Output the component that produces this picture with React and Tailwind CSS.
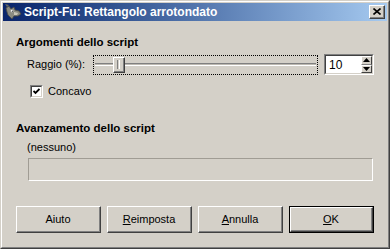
const face = { fontFamily: '"Liberation Sans", Arial, sans-serif' }

function Btn({ children, def }) {
  const inner = (
    <div className="h-full w-full border-t border-l border-t-white border-l-white border-r border-b border-r-[#404040] border-b-[#404040]">
      <div className="h-full w-full border-r border-b border-r-[#808080] border-b-[#808080] flex items-center justify-center text-[11px] text-black">
        {children}
      </div>
    </div>
  )
  return (
    <div className={def ? 'w-[85px] h-[27px] border border-black' : 'w-[85px] h-[27px]'}>{inner}</div>
  )
}

function Wilber() {
  return (
    <svg width="17" height="16" viewBox="0 0 17 16">
      <path d="M1 4 L4 2 L6 5 L9 3 L10 6 L14 7 L16 10 L13 12 L9 12 L7 15 L5 13 L3 11 L2 8 Z" fill="#8a8a80" stroke="#4a4a44" strokeWidth="0.8" />
      <path d="M9 8 L13 9 L12 11 L9 11 Z" fill="#c9c6b8" />
      <circle cx="7" cy="7" r="1.3" fill="#fff" />
      <circle cx="7.3" cy="7.2" r="0.6" fill="#000" />
      <path d="M2 3 L0 0 L4 1 Z" fill="#6a6a60" />
    </svg>
  )
}

export default function App() {
  return (
    <div className="w-[390px] h-[249px] bg-[#d4d0c8] border-t border-l border-t-[#d4d0c8] border-l-[#d4d0c8] border-r border-b border-r-[#404040] border-b-[#404040]" style={face}>
      <div className="h-full border-t border-l border-t-white border-l-white border-r border-b border-r-[#808080] border-b-[#808080] p-px flex flex-col">
        {/* title bar */}
        <div className="h-[18px] flex items-center bg-gradient-to-r from-[#0a246a] to-[#a6caf0] pl-[2px] pr-[2px]">
          <Wilber />
          <span className="ml-[2px] text-white font-bold text-[12px] leading-none">Script-Fu: Rettangolo arrotondato</span>
          <div className="ml-auto w-[16px] h-[14px] bg-[#d4d0c8] border-t border-l border-t-white border-l-white border-r border-b border-r-[#404040] border-b-[#404040]">
            <div className="h-full w-full border-r border-b border-r-[#808080] border-b-[#808080] flex items-center justify-center">
              <svg width="8" height="7" viewBox="0 0 8 7">
                <path d="M0.5 0.5 L7.5 6.5 M7.5 0.5 L0.5 6.5" stroke="#000" strokeWidth="1.6" />
              </svg>
            </div>
          </div>
        </div>

        {/* body */}
        <div className="flex flex-col pl-[13px] pt-[15px] text-[11px] text-black">
          <div className="font-bold text-[11.5px] leading-[13px]">Argomenti dello script</div>

          <div className="mt-[5px] h-[21px] flex items-center pl-[11px]">
            <span className="w-[66px] leading-[13px]">Raggio (%):</span>
            <div className="w-[225px] h-[20px] border border-dotted border-black relative flex items-center px-[1px]">
              <div className="w-full h-[3px] border-t border-t-[#808080] bg-[#bdb9b1] border-b border-b-white" />
              <div className="absolute left-[19px] top-[1px] w-[12px] h-[16px] bg-[#d4d0c8] border-t border-l border-t-white border-l-white border-r border-b border-r-[#404040] border-b-[#404040]">
                <div className="h-full w-full border-r border-b border-r-[#808080] border-b-[#808080] flex justify-center pt-[2px]">
                  <div className="w-[3px] h-[9px] border-l border-l-[#808080] border-r border-r-white" />
                </div>
              </div>
            </div>
            <div className="ml-[6px] w-[50px] h-[21px] border-t border-l border-t-[#808080] border-l-[#808080] border-r border-b border-r-white border-b-white">
              <div className="h-full w-full border-t border-l border-t-[#404040] border-l-[#404040] border-r border-b border-r-[#d4d0c8] border-b-[#d4d0c8] bg-white flex items-center">
                <span className="ml-[3px] text-[12px]">10</span>
                <div className="ml-auto h-full w-[11px] flex flex-col bg-[#d4d0c8]">
                  <div className="flex-1 flex items-center justify-center border-t border-l border-t-white border-l-white border-r border-b border-r-[#404040] border-b-[#808080]">
                    <svg width="7" height="4" viewBox="0 0 7 4"><path d="M3.5 0 L7 4 L0 4 Z" fill="#000" /></svg>
                  </div>
                  <div className="flex-1 flex items-center justify-center border-t border-l border-t-white border-l-white border-r border-b border-r-[#404040] border-b-[#404040]">
                    <svg width="7" height="4" viewBox="0 0 7 4"><path d="M0 0 L7 0 L3.5 4 Z" fill="#000" /></svg>
                  </div>
                </div>
              </div>
            </div>
          </div>

          <div className="mt-[10px] h-[13px] flex items-center pl-[14px]">
            <div className="w-[13px] h-[13px] border-t border-l border-t-[#808080] border-l-[#808080] border-r border-b border-r-white border-b-white">
              <div className="h-full w-full border-t border-l border-t-[#404040] border-l-[#404040] border-r border-b border-r-[#d4d0c8] border-b-[#d4d0c8] bg-white flex items-center justify-center">
                <svg width="7" height="7" viewBox="0 0 7 7"><path d="M0.5 3 L2.5 5 L6.5 1" stroke="#000" strokeWidth="1.8" fill="none" /></svg>
              </div>
            </div>
            <span className="ml-[5px] leading-[13px]">Concavo</span>
          </div>

          <div className="mt-[24px] font-bold text-[11.5px] leading-[13px]">Avanzamento dello script</div>
          <div className="mt-[6px] pl-[11px] leading-[13px]">(nessuno)</div>
          <div className="mt-[4px] ml-[12px] w-[345px] h-[23px] border-t border-l border-t-[#a09c94] border-l-[#a09c94] border-r border-b border-r-white border-b-white" />

          <div className="mt-[25px] flex gap-[6px]">
            <Btn>Aiuto</Btn>
            <Btn><span><u>R</u>eimposta</span></Btn>
            <Btn><span><u>A</u>nnulla</span></Btn>
            <Btn def><span><u>O</u>K</span></Btn>
          </div>
        </div>
      </div>
    </div>
  )
}
